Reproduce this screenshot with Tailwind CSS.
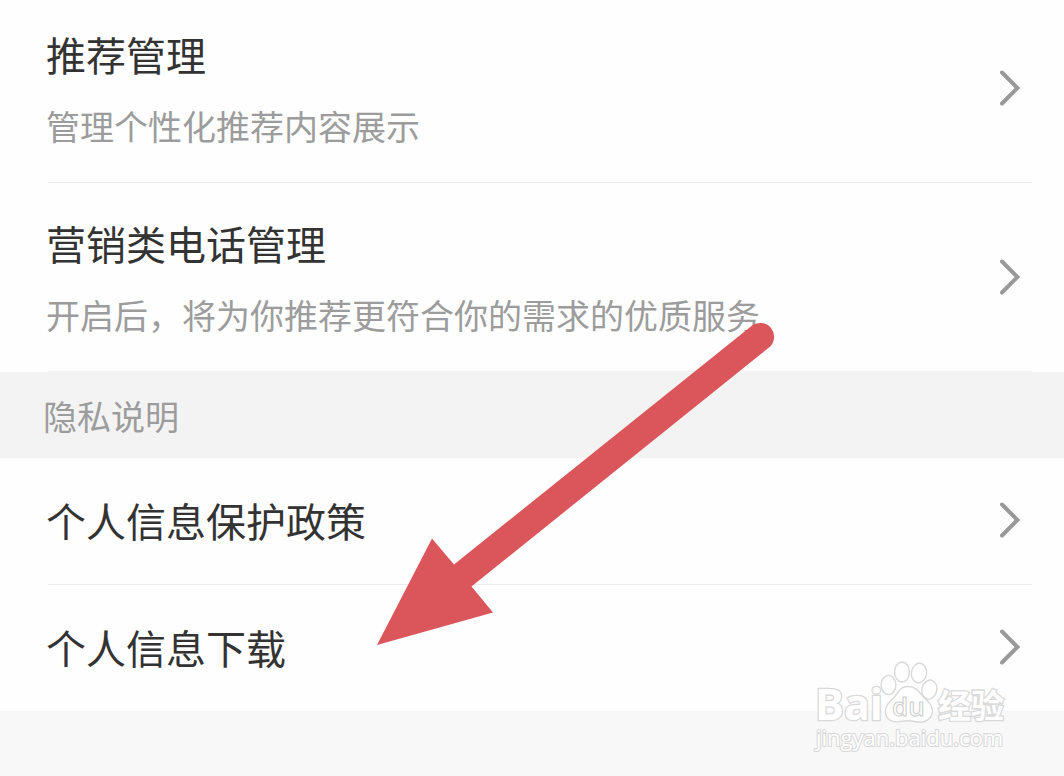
<!DOCTYPE html>
<html lang="zh-CN">
<head>
<meta charset="utf-8">
<meta name="viewport" content="width=device-width, initial-scale=1">
<title>隐私设置</title>
<script src="https://cdn.jsdelivr.net/npm/@tailwindcss/browser@4"></script>
</head>
<body class="relative min-h-screen overflow-hidden bg-[#f8f8f8] font-['Noto_Sans_CJK_SC',sans-serif]">
<main class="-mt-1.5 bg-[#fefefe] text-[#333]">
  <section>
    <a href="#recommend" class="flex items-center justify-between pt-8 pr-11 pb-8 pl-[46px]">
      <span class="flex flex-col gap-5">
        <span class="text-[40px] leading-14">推荐管理</span>
        <span class="text-[34px] leading-12 text-[#9c9c9c]">管理个性化推荐内容展示</span>
      </span>
      <svg class="h-9 w-5 shrink-0 text-[#999]" viewBox="0 0 20 36" fill="none" stroke="currentColor" stroke-width="4" stroke-linecap="round" aria-hidden="true"><path d="M2 2.500 17.500 18 2 33.500"/></svg>
    </a>
    <hr class="mr-8 ml-12 border-t border-[#ececec]">
    <a href="#calls" class="flex items-center justify-between pt-8 pr-11 pb-8 pl-[46px]">
      <span class="flex flex-col gap-5">
        <span class="text-[40px] leading-14">营销类电话管理</span>
        <span class="text-[34px] leading-12 text-[#9c9c9c]">开启后，将为你推荐更符合你的需求的优质服务</span>
      </span>
      <svg class="h-9 w-5 shrink-0 text-[#999]" viewBox="0 0 20 36" fill="none" stroke="currentColor" stroke-width="4" stroke-linecap="round" aria-hidden="true"><path d="M2 2.500 17.500 18 2 33.500"/></svg>
    </a>
    <hr class="mr-8 ml-12 border-t border-[#f2f2f2]">
  </section>
  <section>
    <h2 class="bg-[#f3f3f3] pt-5 pb-[18px] pl-[43px] text-[34px] leading-12 text-[#9c9c9c]">隐私说明</h2>
    <a href="#policy" class="flex items-center justify-between pt-[34px] pr-11 pb-9 pl-[46px]">
      <span class="text-[40px] leading-14">个人信息保护政策</span>
      <svg class="h-9 w-5 shrink-0 text-[#999]" viewBox="0 0 20 36" fill="none" stroke="currentColor" stroke-width="4" stroke-linecap="round" aria-hidden="true"><path d="M2 2.500 17.500 18 2 33.500"/></svg>
    </a>
    <hr class="mr-8 ml-12 border-t border-[#ececec]">
    <a href="#download" class="flex items-center justify-between pt-[34px] pr-11 pb-9 pl-[46px]">
      <span class="text-[40px] leading-14">个人信息下载</span>
      <svg class="h-9 w-5 shrink-0 text-[#999]" viewBox="0 0 20 36" fill="none" stroke="currentColor" stroke-width="4" stroke-linecap="round" aria-hidden="true"><path d="M2 2.500 17.500 18 2 33.500"/></svg>
    </a>
  </section>
</main>

<!-- Pointer arrow laid over the list -->
<svg class="pointer-events-none absolute top-[322px] left-[376px] h-[324px] w-[400px]" viewBox="376 322 400 324" fill="#db565b" aria-hidden="true">
  <path d="M377 645 432 538.500 454 564.500 751.500 326A13.600 13.600 0 0 1 769 347.500L471.500 586.500 493 612.500Z"/>
</svg>

<!-- Outlined watermark -->
<svg class="pointer-events-none absolute top-[656px] left-[810px] h-[100px] w-[204px]" viewBox="810 656 204 100" fill="#fff" stroke="#d9d9d9" stroke-width="1.400" role="img" aria-label="Baidu 经验 jingyan.baidu.com">
  <text x="815" y="720" font-family="Open Sans, sans-serif" font-weight="700" font-size="43" stroke-width="2.600" paint-order="stroke">Bai</text>
  <ellipse cx="888.500" cy="685" rx="7.400" ry="9.600"/>
  <ellipse cx="902" cy="672" rx="7.400" ry="10"/>
  <ellipse cx="919" cy="673" rx="7.600" ry="9.800" transform="rotate(8 919 673)"/>
  <ellipse cx="929.500" cy="689.500" rx="7.500" ry="9.600" transform="rotate(12 929 689)"/>
  <path d="M908 686.500C900 686.500 898 693 894 697.500C889 702.500 885 706 885.500 712C886 720 893 723 900 721.500Q908 720 916 721.800C924 723.500 932 720 932.500 711C932.500 704 927 701 923 696.500C919 691.500 916 686.500 908 686.500Z"/>
  <text x="892" y="716" font-family="Open Sans, sans-serif" font-size="26" font-weight="600" stroke="#ccc" stroke-width="1">du</text>
  <text x="938" y="718" font-family="Noto Sans CJK SC, sans-serif" font-weight="700" font-size="33" stroke-width="2.600" paint-order="stroke">经验</text>
  <text x="816" y="746" font-family="Open Sans, sans-serif" font-size="22" stroke-width="2.200" paint-order="stroke">jingyan.baidu.com</text>
</svg>
</body>
</html>
